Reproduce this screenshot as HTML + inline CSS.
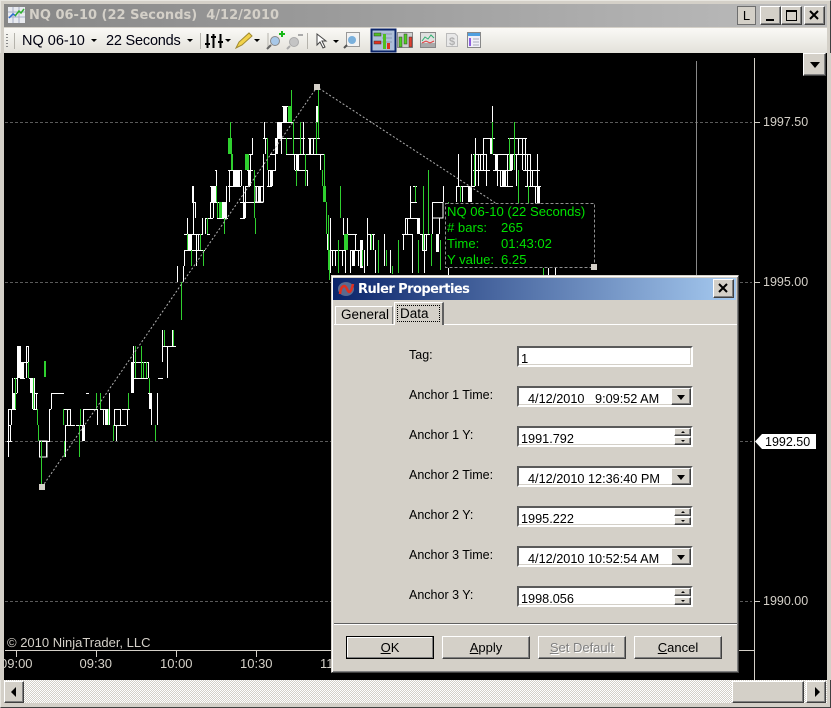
<!DOCTYPE html>
<html><head><meta charset="utf-8"><style>
html,body{margin:0;padding:0;width:831px;height:708px;overflow:hidden;background:#d4d0c8}
*{box-sizing:border-box}
div,span{position:absolute;white-space:pre;font-family:"Liberation Sans",sans-serif;font-size:12px;line-height:14px;color:#000}
.btn{background:#d4d0c8;border:1px solid;border-color:#fff #404040 #404040 #fff;box-shadow:inset -1px -1px 0 #808080}
.f{left:185px;width:176px;height:21px;background:#fff;border:2px solid;border-color:#5a5a5a #fff #fff #5a5a5a;box-shadow:inset -1px -1px 0 #d4d0c8}
.l{left:77px;font-size:12.5px}
.t{font-size:12.7px;color:#000;top:4px}
.dd{right:0;top:0;width:20px;height:17px}
.dd:after{content:"";position:absolute;left:5px;top:6px;border:4px solid transparent;border-top:5px solid #000;border-bottom:0}
.sp{right:0;width:17px;height:8px}
.u:after,.d:after{content:"";position:absolute;left:6px;border:2px solid transparent}
.u:after{top:2px;border-bottom:2px solid #000;border-top:0}
.d:after{top:2px;border-top:2px solid #000;border-bottom:0}
.b{top:636px;height:23px;width:88px;text-align:center;line-height:22px;font-size:13px}
.arr{width:0;height:0;border:3px solid transparent;border-top:3px solid #000;border-bottom:0}
</style></head><body>
<div style="left:0;top:0;width:831px;height:708px;background:#d4d0c8;border:1px solid;border-color:#e8e6e0 #404040 #404040 #e8e6e0"></div>
<div style="left:4px;top:4px;width:823px;height:23px;background:linear-gradient(90deg,#878787,#a0a0a0 50%,#bdbdbd)"></div>
<svg style="position:absolute;left:8px;top:7px" width="17" height="16" viewBox="0 0 17 16"><rect width="17" height="16" fill="#e8eaf0"/><path d="M0 5H17M0 10H17M5 0V16M11 0V16" stroke="#a9b0c8"/><path d="M1 11L5 7L8 9" stroke="#2a6ad0" stroke-width="1.5" fill="none"/><path d="M7 9L11 4L13 6L16 2" stroke="#30b030" stroke-width="1.5" fill="none"/></svg>
<div style="left:29px;top:8px;font:bold 13px 'DejaVu Sans',sans-serif;line-height:16px;color:#d4d0c8">NQ 06-10 (22 Seconds)  4/12/2010</div>
<div style="left:737px;top:6px;width:19px;height:19px;background:#d4d0c8;border:1px solid #6e6e6e;text-align:center;font-size:13px;line-height:17px">L</div>
<div class="btn" style="left:760px;top:6px;width:21px;height:19px"><span style="left:5px;top:12px;width:8px;height:2px;background:#000"></span></div>
<div class="btn" style="left:781px;top:6px;width:21px;height:19px"><span style="left:4px;top:3px;width:11px;height:11px;border:1px solid #000;border-top-width:2px"></span></div>
<div class="btn" style="left:804px;top:6px;width:21px;height:19px"><svg style="position:absolute;left:4px;top:3px" width="11" height="10"><path d="M1 1L9 9M9 1L1 9" stroke="#000" stroke-width="2"/></svg></div>

<div style="left:4px;top:28px;width:823px;height:25px;background:linear-gradient(#faf9f6,#e3e1da)"></div>
<svg style="position:absolute;left:4px;top:28px" width="500" height="25" viewBox="0 0 500 25">
<path d="M3 6V7M3 9V10M3 12V13M3 15V16M3 18V19" stroke="#8a8a8a" stroke-width="2"/>
<path d="M10.500 5V21M196.500 5V21M303.500 5V21M264 5V21" stroke="#b5b3ac" fill="none"/>
<g>
<path d="M203.500 6V20M209.500 6V20M216.500 6V20" stroke="#000" stroke-width="2"/>
<path d="M201 16H206M207 9H212M214 14H219" stroke="#000" stroke-width="2"/>
<path d="M221 11H227L224 14Z" fill="#000"/>
<path d="M232 20L235 14L245 5L248 8L238 17Z" fill="#f2d24a" stroke="#a08a30"/>
<path d="M250 11H256L253 14Z" fill="#000"/>
<circle cx="271" cy="13" r="4.500" fill="#a8c8e8" stroke="#888"/><path d="M267 17L263 21" stroke="#666" stroke-width="2"/><path d="M275 6H281M278 3V9" stroke="#18b818" stroke-width="2"/>
<circle cx="290" cy="14" r="4.500" fill="#c4c4c4" stroke="#aaa"/><path d="M286 18L283 21" stroke="#aaa" stroke-width="2"/><path d="M294 7H299" stroke="#aaa" stroke-width="2"/>
<path d="M313 6V17L316 14L319 20L321 19L318 13H322Z" fill="#fff" stroke="#444"/>
<path d="M329 12H335L332 15Z" fill="#000"/>
<rect x="342.500" y="4.500" width="13" height="14" fill="#f2f2f2" stroke="#999"/><circle cx="348" cy="12" r="4" fill="#7ab0dc"/><path d="M343 17L340 20" stroke="#555" stroke-width="2"/>
<rect x="367.500" y="1.500" width="24" height="22" fill="#aebfd8" stroke="#0a246a" stroke-width="2"/>
<rect x="370" y="5" width="7" height="3" fill="#50c020" stroke="#333" stroke-width=".5"/><rect x="370" y="13" width="7" height="3" fill="#e03020" stroke="#333" stroke-width=".5"/><path d="M378 6H388M378 10H388M378 14H388" stroke="#8a9ab4"/><rect x="379" y="6" width="3" height="15" fill="#50c020"/><rect x="383" y="15" width="3" height="6" fill="#e03020"/>
<rect x="393.500" y="4.500" width="15" height="15" fill="#d0d0d0" stroke="#888"/><rect x="395" y="9" width="3" height="10" fill="#50d020" stroke="#333" stroke-width=".5"/><rect x="400" y="6" width="3" height="10" fill="#50d020" stroke="#333" stroke-width=".5"/><rect x="405" y="9" width="3" height="10" fill="#e04030" stroke="#333" stroke-width=".5"/>
<rect x="416.500" y="4.500" width="15" height="15" fill="#e0e0e0" stroke="#888"/><rect x="417" y="15" width="14" height="4" fill="#aaa"/><path d="M418 13L421 9L424 11L427 7L430 10" stroke="#30b070" fill="none"/><path d="M418 15L422 13L426 15L430 13" stroke="#e04040" fill="none"/>
<path d="M442.500 5.500H451L453.500 8V18.500H442.500Z" fill="#e8e8e8" stroke="#bbb"/><text x="445" y="17" font-family="Liberation Sans" font-weight="bold" font-size="11" fill="#b0b0b0">$</text>
<rect x="463.500" y="4.500" width="13" height="15" fill="#f0f0f8" stroke="#888"/><rect x="464" y="5" width="12" height="3" fill="#50a0e0"/><rect x="465" y="10" width="2" height="8" fill="#9060e0"/><path d="M469 11H475M469 14H475M469 17H475" stroke="#aab"/>
</g></svg>
<div style="left:22px;top:33px;font-size:14.500px;line-height:16px;color:#000010">NQ 06-10</div>
<div class="arr" style="left:91px;top:39px"></div>
<div style="left:106px;top:33px;font-size:14.500px;line-height:16px;color:#000010;letter-spacing:-.2px">22 Seconds</div>
<div class="arr" style="left:187px;top:39px"></div>

<svg style="position:absolute;left:4px;top:53px" width="823" height="627" viewBox="4 53 823 627">
<rect x="4" y="53" width="823" height="627" fill="#000"/>
<path d="M5 122.500H752M5 282.500H752M5 441.500H752M5 601.500H752" stroke="#5a5a5a" stroke-dasharray="3 2"/>
<path d="M696.500 61V276" stroke="#888"/>
<!-- thin white -->
<path fill="none" stroke="#fff" d="
M8.500 409V457M10.500 425V441M11.500 409V425M17.500 346V393M20.500 346V378M23.500 362V378M26.500 346V378M36.500 393V409M39.500 441V457H47V441H39M49.500 409V441M51.500 393.500V409M51 393.500H64
M65.500 425V457M67.500 409V425M70.500 409V425M65 425.500H75M83.500 409V425M83 409.500H97M86 393.500H89M97.500 409V425M103.500 409V425M109.500 393V425M114.500 409V425M113 425.500H126M116.500 425V441M120.500 409V425M127.500 409V425M133.500 346V362
M148.500 362V378M148 393.500H152M151.500 393V425M157.500 393V425M162.500 330V362M167.500 346V378M172.500 330V346M177.500 266V282M183.500 266V282M184.500 250V266M187.500 218V234M193.500 202V234M195.500 202V218M196.500 234V266M202.500 218V234
M210.500 202V218M216.500 170V186M226.500 186V202M241.500 170V186M245.500 186V202M245 218.500H241M252.500 138V154M255 186.500H263M263.500 186V202H255V186M263.500 154V186M264.500 122V138M265.500 138V154M272.500 170V186M275.500 154V170M277.500 122V154M294.500 154V170M303.500 122V154M307.500 170V186M320.500 154V170M295 170.500H308M308 138.500H320
M328.500 234V250M332.500 250V266M338.500 250V266M343.500 218V234M347.500 218V234M355.500 234V250M358.500 250V266M367.500 218V266M373.500 234V250M384.500 234V266M403.500 234V250M405.500 218V234M407.500 218V234M410.500 186V218M432.500 202V234M433 202.500H443V218H433M443.500 186V202M439.500 218V234
M456.500 186V202M458.500 154V186M468.500 186V202M475.500 138V186M480.500 154V170M483.500 138V170M485 170.500H490M492.500 106V122M497.500 154V186M505.500 170V186M512.500 154V170M516.500 154V186M518.500 138V154M525.500 138V170M527.500 154V186M532.500 170V186M537.500 154V186M533 186.500H540
M330.500 218V273M345.500 250V273M350.500 250V273M364.500 250V273M375.500 250V273M390.500 250V273M412.500 234V273M424.500 250V273M448.500 268V275M548.500 268V275M555.500 268V275
M12 393.500H17M33 393.500H38M8 409.500H16M33 409.500H37M49 409.500H51M63 409.500H70M8 425.500H11M7 441.500H12M76 425.500H82M14 378.500H17M20 378.500H25M29 378.500H33M131 378.500H148M17 362.500H28M131 362.500H148M17 346.500H20M26 346.500H28M100 409.500H110M115 409.500H120M122 409.500H130M158 378.500H163M163 346.500H176M39 441.500H50
M184 234.500H203M207 234.500H210M184 250.500H205M206 218.500H213M217 218.500H228M240 218.500H245M192 202.500H195M210 202.500H227M240 202.500H263M210 186.500H216M228 186.500H241M245 186.500H250M267 186.500H272M215 170.500H217M228 170.500H241M247 170.500H253M269 170.500H276M248 154.500H253M270 154.500H275M286 154.500H310M308 154.500H325M263 138.500H267M275 138.500H292M293 138.500H305M277 122.500H293M282 106.500H292
M343 234.500H357M368 234.500H375M402 234.500H412M420 234.500H430M328 250.500H345M350 250.500H360M422 250.500H427M405 218.500H417M410 202.500H417M413 186.500H417M456 186.500H475M473 170.500H490M493 170.500H512M523 170.500H540M473 154.500H487M493 154.500H510M512 154.500H530M483 138.500H495M508 138.500H527M500 186.500H513M525 186.500H541
M12.500 378V393M22.500 362V378M28.500 346V362M31.500 378V393M34.500 378V409M46.500 441V457M190.500 234V250M198.500 234V250M205.500 218V234M213.500 186V218M222.500 202V218M229.500 170V202M235.500 170V186M238.500 170V186M243.500 186V218M250.500 154V186M256.500 186V202M260.500 186V202M268.500 170V186M281.500 122V154M283.500 106V122M289.500 106V122M298.500 154V170M310.500 138V154M313.500 138V154M335.500 250V266M342.500 250V266M353.500 250V266M370.500 234V250M419.500 218V234M426.500 234V250M462.500 186V202M471.500 154V186M478.500 154V186M486.500 154V186M500.500 170V186M507.500 154V186M522.500 138V170M530.500 154V186M535.500 186V204"/>
<!-- thick white -->
<path fill="#fff" d="M12 393h4v16h-4zM17 346h3v32h-3zM21 362h3v16h-3zM30 378h3v15h-3zM32 393h3v16h-3zM82 425h3v16h-3zM105 409h3v16h-3zM131 362h3v31h-3zM149 393h3v16h-3zM188 234h4v16h-4zM192 186h2v16h-2zM211 186h5v16h-5zM219 202h8v16h-8zM233 170h7v16h-7zM243 202h3v16h-3zM248 170h3v16h-3zM258 186h2v16h-2zM270 170h3v16h-3zM275 138h2v16h-2zM277 122h4v16h-4zM284 106h3v16h-3zM296 154h3v16h-3zM309 138h2v16h-2zM316 106h2v16h-2zM327 234h2v16h-2zM352 250h3v16h-3zM417 218h3v16h-3zM490 138h3v16h-3zM495 154h3v16h-3zM502 170h3v16h-3zM509 154h3v16h-3zM537 186h3v18h-3zM436 234h3v18h-3zM469 186h3v16h-3zM422 234h3v16h-3zM360 240h3v28h-3z"/>
<!-- green -->
<path fill="none" stroke="#2fd02f" d="
M15.500 378V409M28.500 362V378M33.500 378V409M37.500 409V425M38.500 425V441M41.500 441V487M63.500 409V425M64.500 441V457M79.500 425V457M80.500 409V425M96.500 393V409M100.500 393V409M108.500 409V425M113.500 425V441M128.500 393V409M135.500 346V378M141.500 346V378M143.500 362V378M146.500 362V378M149.500 378V393M155.500 425V441M164.500 330V346M173.500 330V346M181.500 282V320M187.500 234V250M191.500 250V266M200.500 234V250M203.500 250V266M207.500 218V234M216.500 186V202M217.500 202V218M224.500 218V234M230.500 122V154M231.500 138V170M232.500 154V170M248.500 154V170M254.500 170V218M255.500 218V234M267.500 138V170M286.500 138V154M291.500 90V122M293.500 122V154M296.500 170V186M300.500 122V154M305.500 154V186M318.500 90V138M316.500 122V154M322.500 170V186M324.500 154V186M326.500 202V234M329.500 250V280M340.500 186V218M344.500 234V250M347.500 234V250M362.500 250V266M371.500 234V250M386.500 250V266M392.500 266V274M415.500 186V202M428.500 170V234M431.500 234V266M448.500 202V234M460.500 186V202M474.500 154V186M492.500 122V154M509.500 138V170M514.500 122V170M518.500 170V205M528.500 186V205M423.500 186V250M440.500 240V270M543.500 268V275M328.500 215V270M338.500 240V273M378.500 240V273M398.500 240V273M418.500 240V273"/>
<path fill="#2fd02f" d="M44 377h2v-16h-2zM219 202h3v16h-3zM228 138h2v16h-2zM245 154h3v16h-3zM288 106h3v16h-3zM323 186h3v16h-3zM345 234h2v16h-2z"/>
<!-- ruler -->
<path d="M42 487L317 87L594 267" fill="none" stroke="#b0b0b0" stroke-dasharray="2 2"/>
<rect x="39" y="484" width="6" height="6" fill="#d4d0c8"/><rect x="314" y="84" width="6" height="6" fill="#d4d0c8"/>
<rect x="445.500" y="203.500" width="149" height="64" fill="#000" stroke="#909090" stroke-dasharray="3 2"/>
<rect x="591" y="264" width="6" height="6" fill="#d4d0c8"/>
<g font-family="Liberation Sans" font-size="13.100" fill="#00e000">
<text x="447" y="216">NQ 06-10 (22 Seconds)</text>
<text x="447" y="232"># bars:</text><text x="501" y="232">265</text>
<text x="447" y="248">Time:</text><text x="501" y="248">01:43:02</text>
<text x="447" y="264">Y value:</text><text x="501" y="264">6.25</text></g>
<!-- axes -->
<path d="M754.500 58V680M5 650.500H754M16.500 650V657M96.500 650V657M176.500 650V657M256.500 650V657M336.500 650V657M754 122.500H760M754 282.500H760M754 601.500H760" stroke="#d4d0c8" fill="none"/>
<g font-family="Liberation Sans" font-size="12.500" fill="#d4d0c8">
<text x="763" y="126">1997.50</text><text x="763" y="286">1995.00</text><text x="763" y="605">1990.00</text>
<text x="7" y="647" font-size="13">© 2010 NinjaTrader, LLC</text>
<text x="0" y="668" font-size="13">09:00</text><text x="79.500" y="668" font-size="13">09:30</text><text x="160" y="668" font-size="13">10:00</text><text x="240" y="668" font-size="13">10:30</text><text x="320" y="668" font-size="13">11:00</text></g>
<path d="M755 441.500L762 434H816V449H762Z" fill="#fff"/>
<text x="765" y="446" font-family="Liberation Sans" font-size="12.500" fill="#000">1992.50</text>
</svg>
<div style="left:0;top:53px;width:4px;height:627px;background:#d4d0c8"></div>
<div class="btn" style="left:803px;top:53px;width:23px;height:23px"><span style="left:6px;top:8px;border:5px solid transparent;border-top:6px solid #000;border-bottom:0"></span></div>
<div style="left:827px;top:53px;width:4px;height:627px;background:#d4d0c8"></div>

<div style="left:4px;top:680px;width:823px;height:23px;background:repeating-conic-gradient(#d4d0c8 0 25%,#fff 0 50%) 0 0/2px 2px"></div>
<div class="btn" style="left:4px;top:681px;width:20px;height:22px"><span style="left:6px;top:5px;border:5px solid transparent;border-right:5px solid #000;border-left:0"></span></div>
<div class="btn" style="left:732px;top:681px;width:72px;height:22px"></div>
<div class="btn" style="left:806px;top:681px;width:20px;height:22px"><span style="left:8px;top:5px;border:5px solid transparent;border-left:5px solid #000;border-right:0"></span></div>

<!-- dialog -->
<div style="left:331px;top:275px;width:408px;height:398px;background:#d4d0c8;border:1px solid;border-color:#d4d0c8 #404040 #404040 #d4d0c8;box-shadow:inset 1px 1px 0 #fff,inset -1px -1px 0 #808080">
<div style="left:1px;top:2px;width:403px;height:22px;background:linear-gradient(90deg,#0a246a,#a6caf0)"></div>
<svg style="position:absolute;left:5px;top:5px" width="20" height="17"><ellipse cx="9" cy="8" rx="8" ry="7" fill="#5a6a90"/><path d="M3 13C4 4 8 3 10 8S14 12 16 3" stroke="#e03020" stroke-width="2.500" fill="none"/></svg>
<div style="left:26px;top:5px;font:bold 13px 'DejaVu Sans',sans-serif;line-height:17px;color:#fff;letter-spacing:-.55px">Ruler Properties</div>
<div class="btn" style="left:381px;top:3px;width:21px;height:19px"><svg style="position:absolute;left:4px;top:3px" width="11" height="10"><path d="M1 1L9 9M9 1L1 9" stroke="#000" stroke-width="2"/></svg></div>
<div style="left:2px;top:48px;width:403px;height:1px;background:#fff"></div>
<div style="left:3px;top:30px;width:58px;height:18px;background:#d4d0c8;border:1px solid #fff;border-bottom:0;border-right-color:#808080"><span style="left:5px;top:0;font-size:13.500px;line-height:15px">General</span></div>
<div style="left:62px;top:26px;width:50px;height:23px;background:#d4d0c8;border:1px solid #fff;border-bottom:0;border-right:2px solid #606060"><span style="left:2px;top:2px;width:43px;height:17px;border:1px dotted #000"></span><span style="left:5px;top:3px;font-size:13.500px;line-height:15px">Data</span></div>

<div class="l" style="top:72px">Tag:</div>
<div class="f" style="top:70px"><span style="left:2px;top:4px;font-size:13px">1</span></div>
<div class="l" style="top:112px">Anchor 1 Time:</div>
<div class="f" style="top:110px"><span class="t" style="left:9px">4/12/2010   9:09:52 AM</span><div class="btn dd"></div></div>
<div class="l" style="top:152px">Anchor 1 Y:</div>
<div class="f" style="top:150px"><span class="t" style="left:2px">1991.792</span><div class="btn sp u" style="top:0"></div><div class="btn sp d" style="top:9px"></div></div>
<div class="l" style="top:192px">Anchor 2 Time:</div>
<div class="f" style="top:190px"><span class="t" style="left:9px">4/12/2010 12:36:40 PM</span><div class="btn dd"></div></div>
<div class="l" style="top:232px">Anchor 2 Y:</div>
<div class="f" style="top:230px"><span class="t" style="left:2px">1995.222</span><div class="btn sp u" style="top:0"></div><div class="btn sp d" style="top:9px"></div></div>
<div class="l" style="top:272px">Anchor 3 Time:</div>
<div class="f" style="top:270px"><span class="t" style="left:9px">4/12/2010 10:52:54 AM</span><div class="btn dd"></div></div>
<div class="l" style="top:312px">Anchor 3 Y:</div>
<div class="f" style="top:310px"><span class="t" style="left:2px">1998.056</span><div class="btn sp u" style="top:0"></div><div class="btn sp d" style="top:9px"></div></div>
<div style="left:2px;top:347px;width:403px;height:1px;background:#606060"></div>
<div style="left:2px;top:348px;width:403px;height:1px;background:#fff"></div>
</div>
<div class="btn b" style="left:346px;border-color:#000;box-shadow:inset -1px -1px 0 #808080,inset 1px 1px 0 #fff"><u>O</u>K</div>
<div class="btn b" style="left:442px"><u>A</u>pply</div>
<div class="btn b" style="left:538px;color:#808080;text-shadow:1px 1px 0 #fff"><u>S</u>et Default</div>
<div class="btn b" style="left:634px"><u>C</u>ancel</div>
</body></html>
